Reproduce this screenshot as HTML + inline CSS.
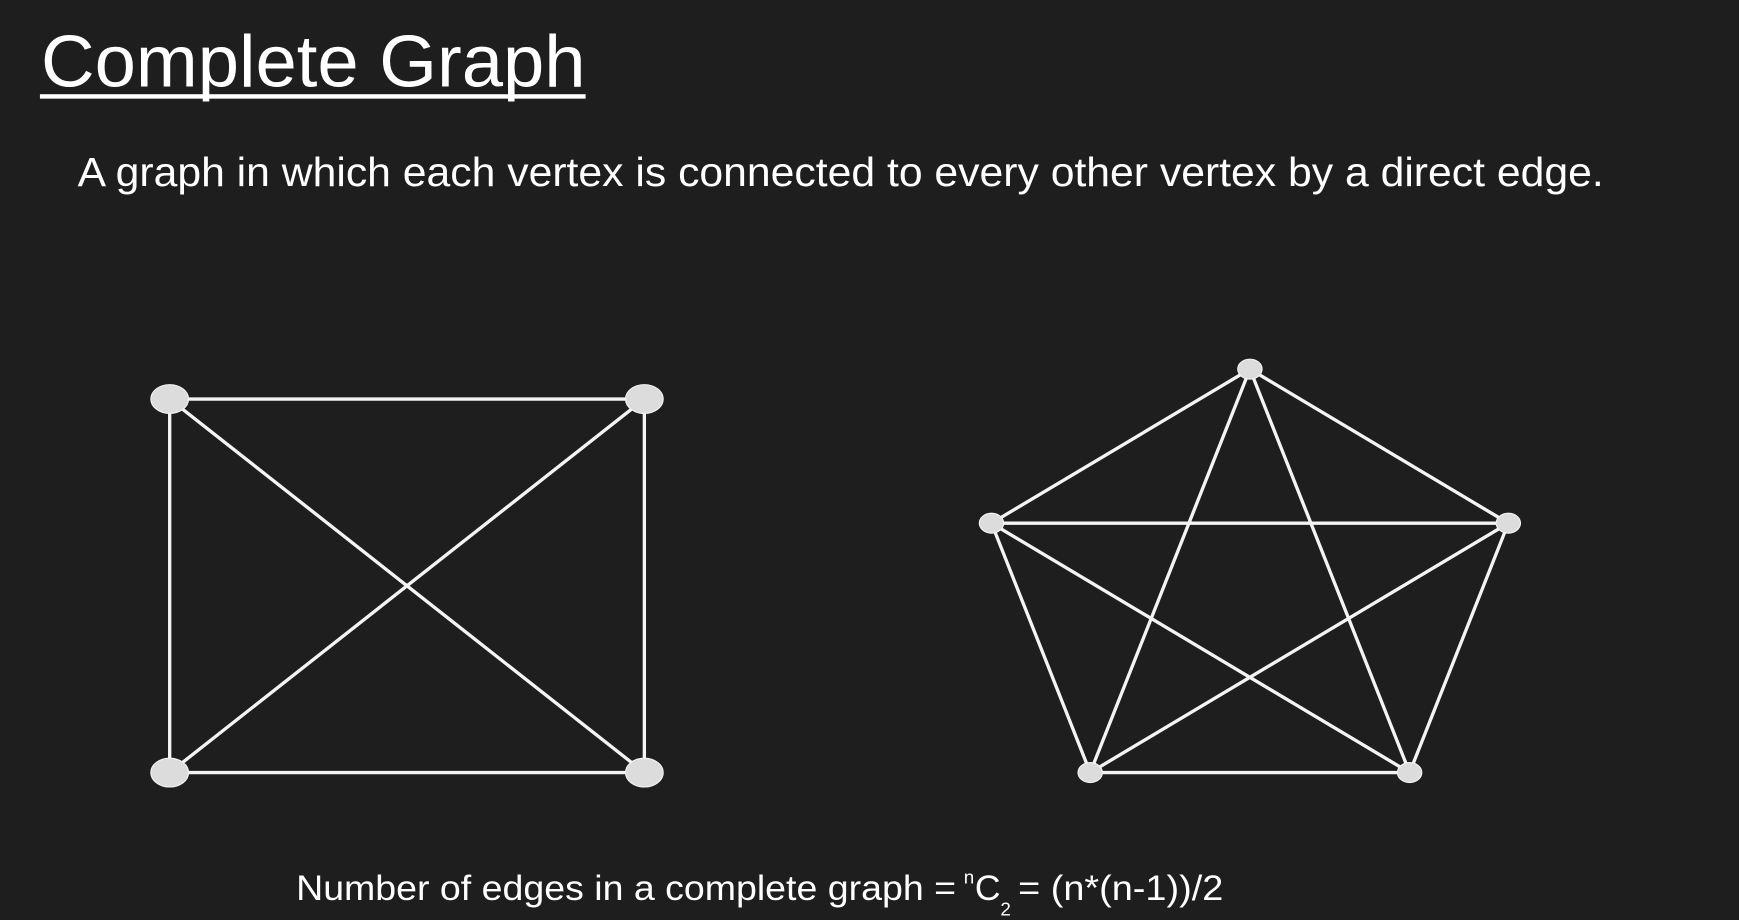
<!DOCTYPE html>
<html><head><meta charset="utf-8"><style>
html,body{margin:0;padding:0;background:#1e1e1e;overflow:hidden}
svg{display:block}
text{font-family:"Liberation Sans",Arial,sans-serif;fill:#fff}
</style></head><body>
<svg width="1739" height="920" viewBox="0 0 1568 830" preserveAspectRatio="none" xmlns="http://www.w3.org/2000/svg">
<rect width="1568" height="830" fill="#1e1e1e"/>
<text x="37" y="78" font-size="66" textLength="491" lengthAdjust="spacingAndGlyphs">Complete Graph</text>
<rect x="36" y="85" width="492" height="4" fill="#fff"/>
<text x="70" y="168" font-size="37" textLength="1376" lengthAdjust="spacingAndGlyphs">A graph in which each vertex is connected to every other vertex by a direct edge.</text>
<g stroke="#f4f4f4" stroke-width="3" fill="none">
<line x1="153" y1="360" x2="581" y2="360"/>
<line x1="153" y1="697" x2="581" y2="697"/>
<line x1="153" y1="360" x2="153" y2="697"/>
<line x1="581" y1="360" x2="581" y2="697"/>
<line x1="153" y1="360" x2="581" y2="697"/>
<line x1="581" y1="360" x2="153" y2="697"/>
<line x1="1127" y1="333" x2="894" y2="472"/>
<line x1="1127" y1="333" x2="1360" y2="472"/>
<line x1="1127" y1="333" x2="983" y2="697"/>
<line x1="1127" y1="333" x2="1271" y2="697"/>
<line x1="894" y1="472" x2="1360" y2="472"/>
<line x1="894" y1="472" x2="983" y2="697"/>
<line x1="894" y1="472" x2="1271" y2="697"/>
<line x1="1360" y1="472" x2="983" y2="697"/>
<line x1="1360" y1="472" x2="1271" y2="697"/>
<line x1="983" y1="697" x2="1271" y2="697"/>
</g>
<g fill="#dcdcdc" stroke="#f4f4f4" stroke-width="1">
<ellipse cx="153" cy="360" rx="17" ry="13"/>
<ellipse cx="581" cy="360" rx="17" ry="13"/>
<ellipse cx="153" cy="697" rx="17" ry="13"/>
<ellipse cx="581" cy="697" rx="17" ry="13"/>
<ellipse cx="1127" cy="333" rx="11" ry="9"/>
<ellipse cx="894" cy="472" rx="11" ry="9"/>
<ellipse cx="1360" cy="472" rx="11" ry="9"/>
<ellipse cx="983" cy="697" rx="11" ry="9"/>
<ellipse cx="1271" cy="697" rx="11" ry="9"/>
</g>
<text x="267" y="812" font-size="32" textLength="595" lengthAdjust="spacingAndGlyphs">Number of edges in a complete graph =</text>
<text x="869" y="797" font-size="17">n</text>
<text x="879" y="812" font-size="32">C</text>
<text x="902" y="826" font-size="17">2</text>
<text x="918" y="812" font-size="32" textLength="185" lengthAdjust="spacingAndGlyphs">= (n*(n-1))/2</text>
</svg>
</body></html>
